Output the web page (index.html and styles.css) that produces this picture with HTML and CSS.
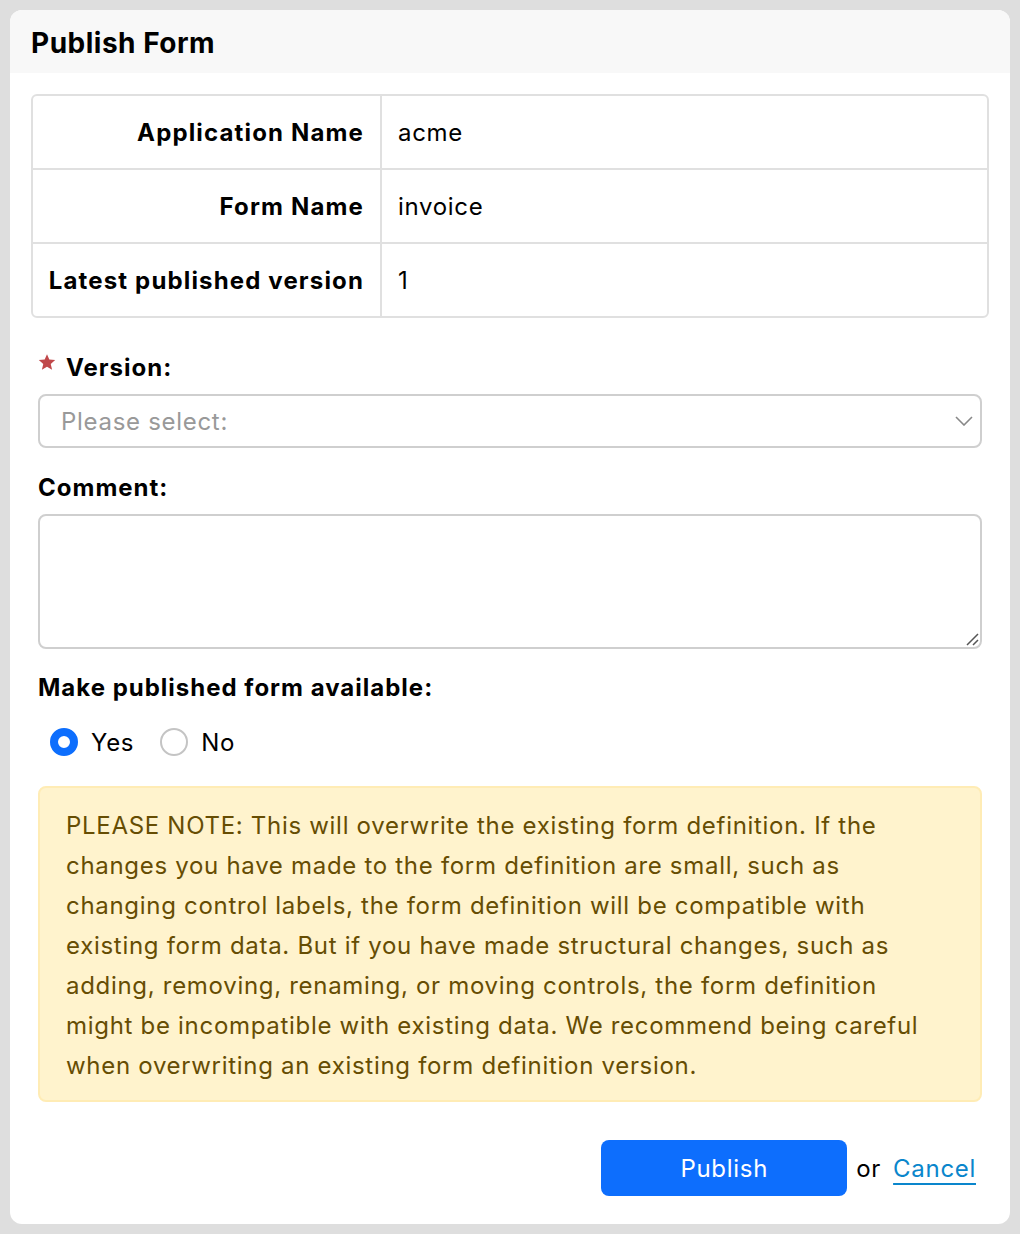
FILE: index.html
```html
<!DOCTYPE html>
<html>
<head>
<meta charset="utf-8">
<link rel="stylesheet" href="styles.css">
</head>
<body>
<div class="card">
  <div class="card-header">Publish Form</div>
  <div class="card-body">
    <table class="info">
      <tr><th>Application Name</th><td>acme</td></tr>
      <tr><th>Form Name</th><td>invoice</td></tr>
      <tr><th>Latest published version</th><td>1</td></tr>
    </table>
    <div class="field-label required">
      <svg class="star" width="18" height="18" viewBox="0 0 24 24"><path d="M12 1.5l3.1 7.2 7.8.7-5.9 5.2 1.8 7.6L12 18.2l-6.8 4 1.8-7.6L1.1 9.4l7.8-.7z" fill="#c0484a"/></svg>
      <span>Version:</span>
    </div>
    <div class="select">
      <span class="placeholder">Please select:</span>
      <svg class="chev" width="18" height="10" viewBox="0 0 18 10"><path d="M1 1l8 8 8-8" fill="none" stroke="#888" stroke-width="1.6"/></svg>
    </div>
    <div class="field-label comment">Comment:</div>
    <div class="textarea">
      <svg class="grip" width="14" height="14" viewBox="0 0 14 14"><path d="M2 13L13 2M8 13l5-5" stroke="#555" stroke-width="1.5"/></svg>
    </div>
    <div class="field-label avail">Make published form available:</div>
    <div class="radios">
      <label class="radio"><span class="dot on"></span>Yes</label>
      <label class="radio"><span class="dot"></span>No</label>
    </div>
    <div class="note">PLEASE NOTE: This will overwrite the existing form definition. If the changes you have made to the form definition are small, such as changing control labels, the form definition will be compatible with existing form data. But if you have made structural changes, such as adding, removing, renaming, or moving controls, the form definition might be incompatible with existing data. We recommend being careful when overwriting an existing form definition version.</div>
    <div class="actions">
      <button class="btn">Publish</button>
      <span class="or">or</span>
      <a class="cancel" href="#">Cancel</a>
    </div>
  </div>
</div>
</body>
</html>
```
FILE: styles.css
```css
html, body { margin: 0; padding: 0; }
body {
  background: #dedede;
  font-family: Inter, "Noto Sans", sans-serif;
  color: #000;
  padding: 10px;
  box-sizing: border-box;
  width: 1020px;
  height: 1234px;
  letter-spacing: 0.7px;
}
.card {
  background: #fff;
  border-radius: 12px;
  overflow: hidden;
  height: 1214px;
}
.card-header {
  background: #f8f8f8;
  height: 63px;
  box-sizing: border-box;
  padding: 17px 21px 0;
  font-size: 28px;
  font-weight: 700;
  line-height: 32px;
  letter-spacing: 0.5px;
}
.card-body {
  padding: 21px 28px 0 28px;
}
.info {
  width: 958px;
  margin-left: -7px;
  border-collapse: separate;
  border-spacing: 0;
  border: 2px solid #e0e0e0;
  border-radius: 6px;
  font-size: 24px;
}
.info th, .info td {
  height: 74px;
  padding: 0 16px;
  box-sizing: border-box;
  border-bottom: 2px solid #e0e0e0;
}
.info tr:last-child th, .info tr:last-child td { border-bottom: none; height: 72px; }
.info th {
  width: 349px;
  padding-left: 8px;
  text-align: right;
  white-space: nowrap;
  font-weight: 700;
  letter-spacing: 1.15px;
  border-right: 2px solid #e0e0e0;
}
.info td { text-align: left; }
.field-label {
  font-size: 24px;
  font-weight: 700;
  letter-spacing: 1px;
  line-height: 32px;
  display: flex;
  align-items: center;
  margin-bottom: 10px;
}
.field-label.required { margin-top: 34px; }
.field-label.comment { margin-top: 24px; }
.field-label.avail { margin-top: 23px; }
.star { margin: 0 10px 0 0; position: relative; top: -6px; }
.select {
  height: 54px;
  border: 2px solid #cfcfcf;
  border-radius: 8px;
  box-sizing: border-box;
  display: flex;
  align-items: center;
  justify-content: space-between;
  padding: 0 7px 0 21px;
}
.placeholder { font-size: 24px; color: #999; }
.textarea {
  height: 135px;
  border: 2px solid #cfcfcf;
  border-radius: 8px;
  box-sizing: border-box;
  position: relative;
}
.grip { position: absolute; right: 1px; bottom: 1px; }
.radios {
  display: flex;
  align-items: center;
  gap: 26px;
  padding-left: 12px;
  font-size: 24px;
  height: 44px;
  margin-top: 16px;
}
.radio { display: flex; align-items: center; gap: 13px; }
.dot {
  width: 28px; height: 28px;
  border-radius: 50%;
  box-sizing: border-box;
  border: 2px solid #c4c4c4;
  background: #fff;
}
.dot.on { border: 8px solid #0d6efd; }
.note {
  margin-top: 22px;
  background: #fff3cd;
  border: 2px solid #ffecb5;
  border-radius: 8px;
  color: #664d03;
  font-size: 24px;
  line-height: 40px;
  padding: 18px 34px 14px 26px;
}
.actions {
  display: flex;
  justify-content: flex-end;
  align-items: center;
  margin-top: 38px;
  padding-right: 6px;
}
.btn {
  width: 246px;
  height: 56px;
  background: #0d6efd;
  color: #fff;
  border: none;
  border-radius: 8px;
  font-family: inherit;
  font-size: 24px;
  letter-spacing: 0.7px;
}
.or { font-size: 24px; margin: 0 12px 0 9px; }
.cancel {
  font-size: 24px;
  color: #0a86cc;
  text-decoration: underline;
  text-underline-offset: 6px;
  text-decoration-thickness: 2px;
}
```
